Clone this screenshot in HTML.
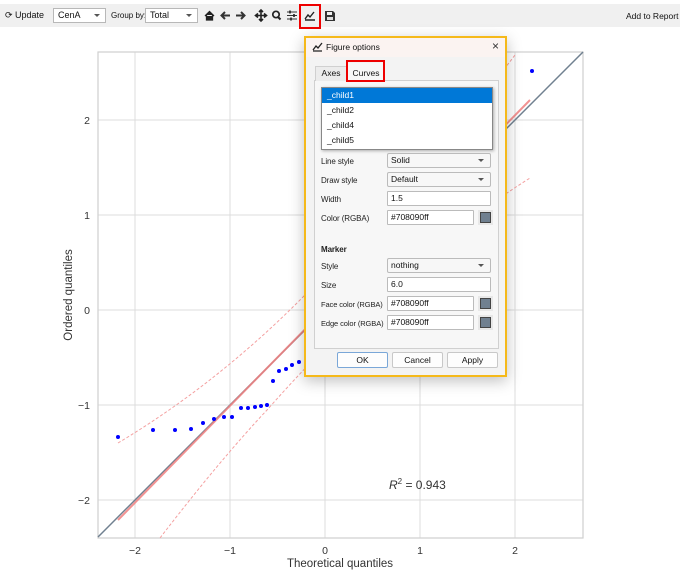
<!DOCTYPE html>
<html><head><style>
*{box-sizing:border-box;margin:0;padding:0}
body{width:684px;height:579px;background:#fff;position:relative;overflow:hidden;font-family:"Liberation Sans",sans-serif;font-size:9px;color:#111}
.a{position:absolute}
.tb{left:0;top:4px;width:680px;height:23px;background:#f0f0f0}
.cb{position:absolute;height:15px;border:1px solid #b8b8b8;background:#fff;font-size:9px;padding:1px 4px;line-height:11px}
.cb:after{content:"";position:absolute;right:5px;top:5px;border:3px solid transparent;border-top:3px solid #555}
.lbl{position:absolute;font-size:8px;color:#222;letter-spacing:-0.1px}
.inp{position:absolute;height:15px;border:1px solid #bbb;background:#fff;font-size:8.5px;padding:1px 3px;line-height:11px;border-radius:1px}
.sel{position:absolute;height:15px;border:1px solid #bbb;background:#f7f7f7;font-size:8.5px;padding:1px 3px;line-height:11px;border-radius:2px}
.sel:after{content:"";position:absolute;right:6px;top:5px;border:3px solid transparent;border-top:3px solid #555}
.sw{position:absolute;width:11px;height:11px;background:#708090;border:1px solid #444;outline:2px solid #e8e8e8}
.btn{position:absolute;height:16px;border:1px solid #c8c8c8;background:#fdfdfd;font-size:8.5px;text-align:center;line-height:14px;border-radius:2px}
</style></head><body>
<div class="a tb"></div>
<div class="a" style="left:5px;top:10px;font-size:9px">&#10227; Update</div>
<div class="cb" style="left:53px;top:8px;width:53px">CenA</div>
<div class="a" style="left:111px;top:11px;font-size:8px">Group by:</div>
<div class="cb" style="left:145px;top:8px;width:53px">Total</div>
<svg class="a" style="left:203px;top:8px" width="135" height="15" viewBox="0 0 135 15">
<path d="M2 8 L6.5 3.5 L11 8 M3.5 7 V12 H9.5 V7" fill="#222" stroke="#222" stroke-width="1.3"/>
<path d="M27 7.5 H19 M22 4 L18.5 7.5 L22 11" stroke="#333" stroke-width="2" fill="none"/>
<path d="M33 7.5 H41 M38 4 L41.5 7.5 L38 11" stroke="#333" stroke-width="2" fill="none"/>
<path d="M58 2 V13 M52.5 7.5 H63.5 M56 4 L58 2 L60 4 M56 11 L58 13 L60 11 M55 5.5 L52.5 7.5 L55 9.5 M61 5.5 L63.5 7.5 L61 9.5" stroke="#222" stroke-width="1.6" fill="none"/>
<circle cx="73" cy="6.5" r="3.2" stroke="#222" stroke-width="1.7" fill="none"/><path d="M75 9 L77.5 11.5" stroke="#222" stroke-width="2"/>
<path d="M84 4 H94 M84 7.5 H94 M84 11 H94" stroke="#333" stroke-width="1"/><path d="M87 2.5 V5.5 M91 6 V9 M88 9.5 V12.5" stroke="#222" stroke-width="1.6"/>
<path d="M102 12 H112 M102 11 L105 7 L107 9 L111 4" stroke="#222" stroke-width="1.4" fill="none"/>
<path d="M122 3 H130 L132 5 V13 H122 Z" fill="#333"/><rect x="124" y="4" width="5" height="3" fill="#f0f0f0"/><rect x="124" y="9" width="6" height="3" fill="#ddd"/>
</svg>
<div class="a" style="left:299px;top:4px;width:22px;height:25px;border:2px solid #e00"></div>
<div class="a" style="left:626px;top:11px;font-size:8.5px">Add to Report</div>

<svg class="a" style="left:0;top:30px" width="684" height="549" viewBox="0 30 684 549">
<g stroke="#dcdcdc" stroke-width="1">
<line x1="135" y1="52" x2="135" y2="538"/><line x1="230" y1="52" x2="230" y2="538"/><line x1="325" y1="52" x2="325" y2="538"/><line x1="420" y1="52" x2="420" y2="538"/><line x1="515" y1="52" x2="515" y2="538"/>
<line x1="98" y1="120" x2="583" y2="120"/><line x1="98" y1="215" x2="583" y2="215"/><line x1="98" y1="310" x2="583" y2="310"/><line x1="98" y1="405" x2="583" y2="405"/><line x1="98" y1="500" x2="583" y2="500"/>
</g>
<rect x="98" y="52" width="485" height="486" fill="none" stroke="#cfcfcf" stroke-width="1.2"/>
<line x1="98" y1="537" x2="583" y2="52" stroke="#708090" stroke-width="1.5"/>
<line x1="118" y1="520" x2="530" y2="100" stroke="#f08080" stroke-width="2" opacity="0.85"/>
<path d="M118 443 Q215 385 300 300 Q420 180 515 55" stroke="#f4a0a0" stroke-width="1" stroke-dasharray="3,2" fill="none"/>
<path d="M160 538 Q220 460 267 410 Q400 260 530 178" stroke="#f4a0a0" stroke-width="1" stroke-dasharray="3,2" fill="none"/>
<g fill="#0000ff">
<circle cx="118" cy="437" r="2"/><circle cx="153" cy="430" r="2"/><circle cx="175" cy="430" r="2"/><circle cx="191" cy="429" r="2"/><circle cx="203" cy="423" r="2"/><circle cx="214" cy="419" r="2"/><circle cx="224" cy="417" r="2"/><circle cx="232" cy="417" r="2"/><circle cx="241" cy="408" r="2"/><circle cx="248" cy="408" r="2"/><circle cx="255" cy="407" r="2"/><circle cx="261" cy="406" r="2"/><circle cx="267" cy="405" r="2"/><circle cx="273" cy="381" r="2"/><circle cx="279" cy="371" r="2"/><circle cx="286" cy="369" r="2"/><circle cx="292" cy="365" r="2"/><circle cx="299" cy="362" r="2"/><circle cx="306" cy="342" r="2"/><circle cx="532" cy="71" r="2"/>
</g>
<g font-family="Liberation Sans,sans-serif" font-size="10.5" fill="#333" text-anchor="middle">
<text x="135" y="554">−2</text><text x="230" y="554">−1</text><text x="325" y="554">0</text><text x="420" y="554">1</text><text x="515" y="554">2</text>
<text x="340" y="567" font-size="11.5">Theoretical quantiles</text>
</g>
<g font-family="Liberation Sans,sans-serif" font-size="10.5" fill="#333" text-anchor="end">
<text x="90" y="124">2</text><text x="90" y="219">1</text><text x="90" y="314">0</text><text x="90" y="409">−1</text><text x="90" y="504">−2</text>
</g>
<text transform="translate(72,295) rotate(-90)" font-family="Liberation Sans,sans-serif" font-size="11.5" fill="#333" text-anchor="middle">Ordered quantiles</text>
<text x="389" y="489" font-family="Liberation Sans,sans-serif" font-size="12" fill="#333"><tspan font-style="italic">R</tspan><tspan font-size="8" dy="-5">2</tspan><tspan dy="5"> = 0.943</tspan></text>
</svg>

<div class="a" style="left:304px;top:36px;width:203px;height:341px;border:2px solid #f5b91a;background:#f3f3f3;box-shadow:0 4px 14px rgba(0,0,0,0.25)">
<div class="a" style="left:0;top:0;width:199px;height:19px;background:#fbf3f1"></div>
<svg class="a" style="left:6px;top:4px" width="11" height="10"><path d="M1 9 H10 M1 8 L4 4 L6 6 L10 1" stroke="#222" stroke-width="1.3" fill="none"/></svg>
<div class="a" style="left:20px;top:4px;font-size:8.5px">Figure options</div>
<div class="a" style="left:186px;top:1px;font-size:12px;color:#333">×</div>
<div class="a" style="left:8px;top:42px;width:185px;height:269px;border:1px solid #d0d0d0;background:#f7f7f7"></div>
<div class="a" style="left:9px;top:28px;width:32px;height:15px;border:1px solid #d0d0d0;border-bottom:none;background:#ececec;font-size:8.5px;text-align:center;line-height:13px">Axes</div>
<div class="a" style="left:41px;top:25px;width:38px;height:18px;background:#f7f7f7;font-size:8.5px;text-align:center;line-height:20px">Curves</div>
<div class="a" style="left:40px;top:22px;width:39px;height:22px;border:2px solid #e00"></div>
<div class="a" style="left:15px;top:49px;width:172px;height:63px;border:1px solid #888;background:#fff;box-shadow:1px 1px 3px rgba(0,0,0,0.3);font-size:8.5px">
<div style="height:15px;background:#0078d7;color:#fff;padding:2px 5px">_child1</div>
<div style="height:15px;padding:2px 5px">_child2</div>
<div style="height:15px;padding:2px 5px">_child4</div>
<div style="height:15px;padding:2px 5px">_child5</div>
</div>
<div class="lbl" style="left:15px;top:119px">Line style</div><div class="sel" style="left:81px;top:115px;width:104px">Solid</div>
<div class="lbl" style="left:15px;top:138px">Draw style</div><div class="sel" style="left:81px;top:134px;width:104px">Default</div>
<div class="lbl" style="left:15px;top:157px">Width</div><div class="inp" style="left:81px;top:153px;width:104px">1.5</div>
<div class="lbl" style="left:15px;top:176px">Color (RGBA)</div><div class="inp" style="left:81px;top:172px;width:87px">#708090ff</div><div class="sw" style="left:174px;top:174px"></div>
<div class="lbl" style="left:15px;top:207px;font-weight:bold">Marker</div>
<div class="lbl" style="left:15px;top:224px">Style</div><div class="sel" style="left:81px;top:220px;width:104px">nothing</div>
<div class="lbl" style="left:15px;top:243px">Size</div><div class="inp" style="left:81px;top:239px;width:104px">6.0</div>
<div class="lbl" style="left:15px;top:262px;font-size:7.5px">Face color (RGBA)</div><div class="inp" style="left:81px;top:258px;width:87px">#708090ff</div><div class="sw" style="left:174px;top:260px"></div>
<div class="lbl" style="left:15px;top:281px;font-size:7.5px">Edge color (RGBA)</div><div class="inp" style="left:81px;top:277px;width:87px">#708090ff</div><div class="sw" style="left:174px;top:279px"></div>
<div class="btn" style="left:31px;top:314px;width:51px;border-color:#7aa7d8">OK</div>
<div class="btn" style="left:86px;top:314px;width:51px">Cancel</div>
<div class="btn" style="left:141px;top:314px;width:51px">Apply</div>
</div>
</body></html>
